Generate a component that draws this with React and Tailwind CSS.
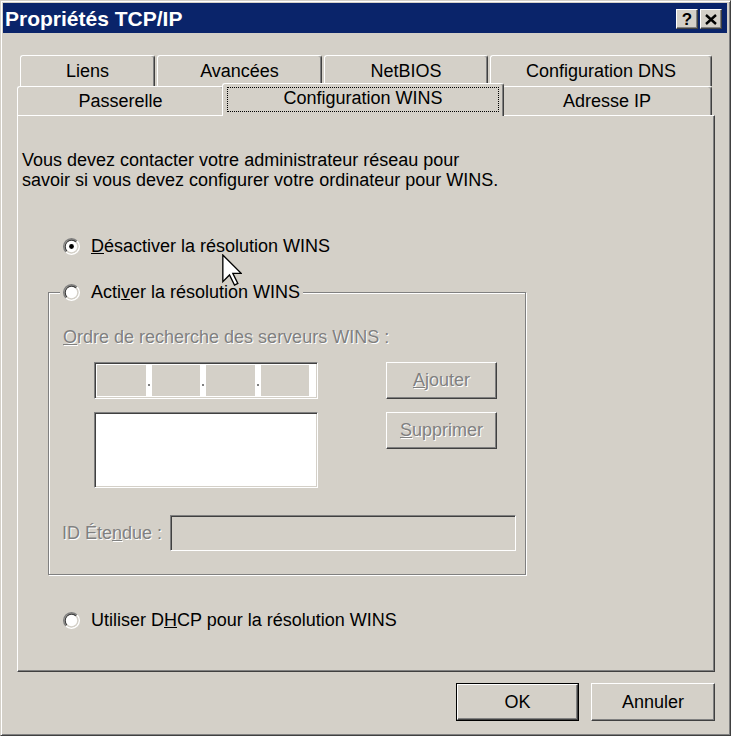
import React from 'react';

// Win2000-style "Propriétés TCP/IP" dialog, WINS page

const raised =
  'bg-[#d4d0c8] border border-t-white border-l-white border-r-[#404040] border-b-[#404040] shadow-[inset_-1px_-1px_0_#808080]';
const sunken =
  'border border-t-[#808080] border-l-[#808080] border-r-white border-b-white shadow-[inset_1px_1px_0_#404040,inset_-1px_-1px_0_#d4d0c8]';
const disabled = 'text-[#808080] [text-shadow:1px_1px_0_#fff]';

const Radio = ({ checked }) => (
    <svg width="17" height="17" viewBox="0 0 12 12" className="shrink-0">
        <path d="M2.11 9.89A5.5 5.5 0 0 1 9.89 2.11" fill="none" stroke="#808080" />
        <path d="M9.89 2.11A5.5 5.5 0 0 1 2.11 9.89" fill="none" stroke="#fff" />
        <path d="M2.82 9.18A4.5 4.5 0 0 1 9.18 2.82" fill="none" stroke="#404040" />
        <path d="M9.18 2.82A4.5 4.5 0 0 1 2.82 9.18" fill="none" stroke="#d4d0c8" />
        <circle cx="6" cy="6" r="4" fill="#fff" />
        {checked && <circle cx="6" cy="6" r="1.7" fill="#000" />}
    </svg>
);

const BackTab = ({ w, children }) => (
    <div
        className={`${w} h-[31px] flex items-center justify-center rounded-t-[3px] border-t border-l border-r border-t-white border-l-white border-r-[#404040] shadow-[inset_-1px_0_0_#808080]`}
    >
        {children}
    </div>
);

const FrontTab = ({ w, children }) => (
    <div
        className={`${w} h-[29px] flex items-center justify-center rounded-t-[3px] border-t border-l border-r border-t-white border-l-white border-r-[#404040] shadow-[inset_-1px_0_0_#808080]`}
    >
        {children}
    </div>
);

const IpField = () => (
    <div className={`w-[224px] h-[37px] flex ${sunken} bg-white p-[2px]`}>
        {[0, 1, 2, 3].map((i) => (
            <React.Fragment key={i}>
                <div className="w-[49px] h-full bg-[#d4d0c8]" />
                <div className="w-[6px] h-full bg-white relative">
                    {i < 3 && <div className="absolute left-[2px] top-[19px] w-[2px] h-[2px] bg-[#808080]" />}
                </div>
            </React.Fragment>
        ))}
    </div>
);

export default function App() {
    return (
        <div className="relative w-[734px] h-[737px] bg-white text-black [font-family:'Liberation_Sans',Arial,sans-serif] text-[18px]">
            <div className="w-[731px] h-[736px] bg-[#d4d0c8] border border-t-[#d4d0c8] border-l-[#d4d0c8] border-r-[#404040] border-b-[#404040] shadow-[inset_1px_1px_0_#fff,inset_-1px_-1px_0_#808080] p-[2px] flex flex-col">
                {/* Title bar */}
                <div className="w-[724px] h-[30px] bg-[#0a246a] flex items-center justify-between pl-[2px] pr-[5px]">
                    <span className="text-white font-bold text-[21px] leading-none">Propriétés TCP/IP</span>
                    <div className="flex gap-[2px] mt-[2px]">
                        <div className={`w-[22px] h-[20px] flex items-center justify-center ${raised}`}>
                            <span className="font-bold text-[17px] leading-none">?</span>
                        </div>
                        <div className={`w-[22px] h-[20px] flex items-center justify-center ${raised}`}>
                            <svg width="12" height="11" viewBox="0 0 12 11">
                                <path d="M1 1L11 10M11 1L1 10" stroke="#000" strokeWidth="2.4" />
                            </svg>
                        </div>
                    </div>
                </div>

                {/* Tabs */}
                <div className="ml-[17px] mt-[22px] flex gap-[2px]">
                    <BackTab w="w-[135px]">Liens</BackTab>
                    <BackTab w="w-[165px]">Avancées</BackTab>
                    <BackTab w="w-[164px]">NetBIOS</BackTab>
                    <BackTab w="w-[222px]">Configuration DNS</BackTab>
                </div>
                <div className="ml-[14px] h-[29px] flex items-end">
                    <FrontTab w="w-[207px]">Passerelle</FrontTab>
                    <div className="relative z-10 w-[282px] h-[33px] -mx-[2px] -mb-px flex items-center justify-center bg-[#d4d0c8] rounded-t-[3px] border-t border-l border-r border-t-white border-l-white border-r-[#404040] shadow-[inset_-1px_0_0_#808080]">
                        <div className="absolute left-[4px] right-[4px] top-[3px] bottom-[4px] border border-dotted border-black" />
                        <span className="-mt-[3px]">Configuration WINS</span>
                    </div>
                    <FrontTab w="w-[210px]">Adresse IP</FrontTab>
                </div>

                {/* Panel */}
                <div className="ml-[14px] w-[698px] h-[557px] flex flex-col border border-t-white border-l-white border-r-[#404040] border-b-[#404040] shadow-[inset_-1px_-1px_0_#808080]">
                    <p className="ml-[4px] mt-[34px] leading-[20px]">
                        Vous devez contacter votre administrateur réseau pour
                        <br />
                        savoir si vous devez configurer votre ordinateur pour WINS.
                    </p>

                    <div className="ml-[45px] mt-[46px] h-[20px] flex items-center gap-[11px]">
                        <Radio checked />
                        <span>
                            <u>D</u>ésactiver la résolution WINS
                        </span>
                    </div>

                    <fieldset className="ml-[30px] mt-[26px] w-[478px] h-[293px] border border-[#808080] shadow-[inset_1px_1px_0_#fff,1px_1px_0_#fff]">
                        <legend className="ml-[11px] px-[3px] h-[20px] bg-[#d4d0c8] flex items-center gap-[11px]">
                            <Radio />
                            <span>
                                Acti<u>v</u>er la résolution WINS
                            </span>
                        </legend>

                        <div className={`ml-[14px] mt-[25px] leading-[20px] ${disabled}`}>
                            <u>O</u>rdre de recherche des serveurs WINS :
                        </div>

                        <div className="mt-[15px] ml-[45px] flex gap-[68px]">
                            <div className="flex flex-col gap-[13px]">
                                <IpField />
                                <div className={`w-[224px] h-[76px] bg-white ${sunken}`} />
                            </div>
                            <div className="flex flex-col gap-[13px]">
                                <div className={`w-[111px] h-[37px] flex items-center justify-center ${raised} ${disabled}`}>
                                    <span>
                                        <u>A</u>jouter
                                    </span>
                                </div>
                                <div className={`w-[111px] h-[37px] flex items-center justify-center ${raised} ${disabled}`}>
                                    <span>
                                        <u>S</u>upprimer
                                    </span>
                                </div>
                            </div>
                        </div>

                        <div className="mt-[27px] ml-[13px] flex items-center">
                            <span className={`w-[108px] ${disabled}`}>
                                ID Éte<u>n</u>due :
                            </span>
                            <div className={`w-[346px] h-[36px] bg-[#d4d0c8] ${sunken}`} />
                        </div>
                    </fieldset>

                    <div className="ml-[45px] mt-[35px] h-[20px] flex items-center gap-[11px]">
                        <Radio />
                        <span>
                            Utiliser D<u>H</u>CP pour la résolution WINS
                        </span>
                    </div>
                </div>

                {/* Dialog buttons */}
                <div className="mt-[11px] pr-[13px] flex justify-end gap-[12px]">
                    <div className="w-[123px] h-[38px] border border-black">
                        <div className={`w-full h-full flex items-center justify-center ${raised}`}>OK</div>
                    </div>
                    <div className={`w-[124px] h-[38px] flex items-center justify-center ${raised}`}>Annuler</div>
                </div>
            </div>

            {/* Mouse pointer */}
            <svg className="absolute left-[222px] top-[254px]" width="20" height="32" viewBox="0 0 12 19">
                <path
                    d="M0.5 0.5L0.5 16.5L4.5 12.5L7.5 18.5L9.5 17.5L6.5 11.5L11.5 11.5Z"
                    fill="#fff"
                    stroke="#000"
                    strokeWidth="0.8"
                    strokeLinejoin="miter"
                />
            </svg>
        </div>
    );
}
